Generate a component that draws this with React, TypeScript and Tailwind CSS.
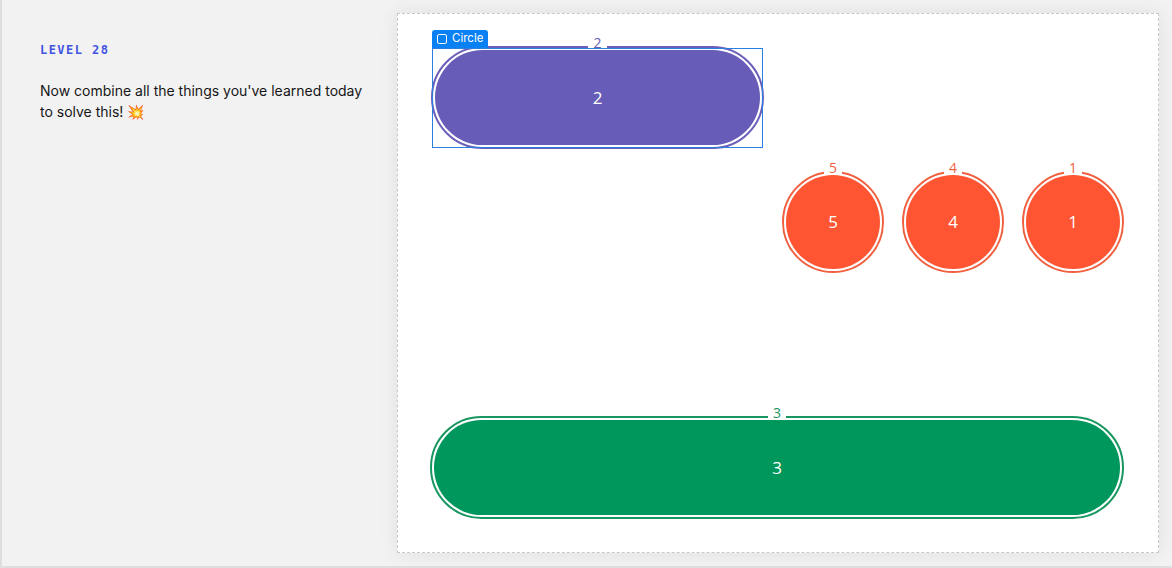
import React from 'react';

type Shape = {
  id: string;
  left: number;
  top: number;
  w: number;
  h: number;
  ring: string;
  fill: string;
  text: string;
};

const shapes: Shape[] = [
  { id: '2', left: 33, top: 32, w: 333, h: 103, ring: 'border-[#6a5fb9]', fill: 'bg-[#675cb7]', text: 'text-[#675cb7]' },
  { id: '5', left: 384, top: 157, w: 102, h: 102, ring: 'border-[#f0603f]', fill: 'bg-[#ff5533]', text: 'text-[#f0603f]' },
  { id: '4', left: 504, top: 157, w: 102, h: 102, ring: 'border-[#f0603f]', fill: 'bg-[#ff5533]', text: 'text-[#f0603f]' },
  { id: '1', left: 624, top: 157, w: 102, h: 102, ring: 'border-[#f0603f]', fill: 'bg-[#ff5533]', text: 'text-[#f0603f]' },
  { id: '3', left: 32, top: 402, w: 694, h: 103, ring: 'border-[#17975f]', fill: 'bg-[#00975c]', text: 'text-[#17975f]' },
];

function Pill({ s }: { s: Shape }) {
  return (
    <div
      className="absolute"
      style={{ left: s.left, top: s.top, width: s.w, height: s.h }}
    >
      <div className={`h-full w-full rounded-full border-2 ${s.ring} p-[2px]`}>
        <div className={`flex h-full w-full items-center justify-center rounded-full ${s.fill} text-[17px] text-white`}>
          {s.id}
        </div>
      </div>
      <div className="absolute -top-[10px] left-0 right-0 flex justify-center">
        <span className={`bg-white px-[5px] text-[14px] leading-[14px] ${s.text}`}>{s.id}</span>
      </div>
    </div>
  );
}

export default function App() {
  return (
    <div className="flex h-[568px] w-[1172px] overflow-hidden border-l-2 border-b-2 border-[#dedede] bg-[#f2f2f2] [font-family:Inter,'Noto_Sans',sans-serif]">
      {/* Instructions */}
      <div className="w-[395px] shrink-0 pl-[38px] pr-6 pt-[41px]">
        <div className="text-[12px] font-bold tracking-[0.12em] text-[#4355e0] [font-family:'DejaVu_Sans_Mono',monospace]">
          LEVEL 28
        </div>
        <p className="mt-[21px] text-[14px] leading-[21px] text-[#161616]">
          Now combine all the things you've learned today to solve this! 💥
        </p>
      </div>

      {/* Canvas */}
      <div className="mt-[13px] h-[540px] w-[762px] shrink-0 border border-dashed border-[#c8c8c8] bg-white shadow-[0_0_18px_rgba(0,0,0,0.08)]">
        <div className="relative h-full w-full [font-family:'Open_Sans',sans-serif]">
          {shapes.map((s) => (
            <Pill key={s.id} s={s} />
          ))}

          {/* selection box */}
          <div className="pointer-events-none absolute left-[34px] top-[34px] h-[100px] w-[331px] border border-[#2a7fe0]" />
          <div className="absolute left-[34px] top-[16px] flex h-[18px] items-center gap-[5px] rounded-t-[3px] bg-[#0a80f5] px-[5px] text-[11.5px] text-white [font-family:Inter,sans-serif]">
            <span className="inline-block h-[10px] w-[10px] rounded-[2px] border border-white" />
            Circle
          </div>
        </div>
      </div>
    </div>
  );
}
